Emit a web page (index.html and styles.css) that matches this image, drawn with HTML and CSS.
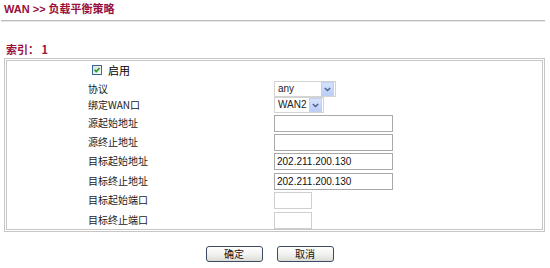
FILE: index.html
```html
<!DOCTYPE html>
<html lang="zh-CN">
<head>
<meta charset="utf-8">
<title>WAN 负载平衡策略</title>
<link rel="stylesheet" href="styles.css">
</head>
<body>
<div class="title">WAN &gt;&gt; 负载平衡策略</div>
<div class="rule"></div>
<div class="index">索引： 1</div>
<div class="box">
  <div class="row r0">
    <div class="enable">
      <span class="check"><svg width="8" height="8" viewBox="0 0 8 8"><path d="M1.6 3.8 L3.3 5.6 L6.6 2" fill="none" stroke="#21a121" stroke-width="1.7"/></svg></span>
      <span>启用</span>
    </div>
  </div>
  <div class="row r1">
    <div class="label">协议</div>
    <div class="select sel-any"><span class="val">any</span><span class="btn"><svg width="7" height="5" viewBox="0 0 7 5"><path d="M0.8 1 L3.5 3.6 L6.2 1" fill="none" stroke="#4d6185" stroke-width="1.4"/></svg></span></div>
  </div>
  <div class="row r2">
    <div class="label">绑定WAN口</div>
    <div class="select sel-wan"><span class="val">WAN2</span><span class="btn"><svg width="7" height="5" viewBox="0 0 7 5"><path d="M0.8 1 L3.5 3.6 L6.2 1" fill="none" stroke="#4d6185" stroke-width="1.4"/></svg></span></div>
  </div>
  <div class="row r3">
    <div class="label">源起始地址</div>
    <div class="input addr"></div>
  </div>
  <div class="row r4">
    <div class="label">源终止地址</div>
    <div class="input addr"></div>
  </div>
  <div class="row r5">
    <div class="label">目标起始地址</div>
    <div class="input addr">202.211.200.130</div>
  </div>
  <div class="row r6">
    <div class="label">目标终止地址</div>
    <div class="input addr">202.211.200.130</div>
  </div>
  <div class="row r7">
    <div class="label">目标起始端口</div>
    <div class="input port"></div>
  </div>
  <div class="row r8">
    <div class="label">目标终止端口</div>
    <div class="input port"></div>
  </div>
</div>
<div class="buttons">
  <button class="button" type="button">确定</button>
  <button class="button" type="button">取消</button>
</div>
</body>
</html>
```
FILE: styles.css
```css
html, body {
  margin: 0;
  padding: 0;
  background: #ffffff;
}
body {
  font-family: "Noto Sans CJK SC", "Liberation Sans", sans-serif;
  font-size: 10px;
  color: #000;
  width: 550px;
}
.title {
  height: 20px;
  line-height: 18px;
  padding-left: 4px;
  font-size: 11px;
  font-weight: bold;
  color: #99103a;
  font-family: "Liberation Sans", "Noto Sans CJK SC", sans-serif;
}
.rule {
  margin: 0 5px 0 1px;
  border-top: 1px solid #bcbcbc;
  border-bottom: 1px solid #e8e8e8;
}
.index {
  margin-top: 20px;
  height: 14px;
  line-height: 14px;
  padding-left: 6px;
  font-size: 11px;
  font-weight: bold;
  color: #99103a;
  font-family: "Noto Sans CJK SC", "Liberation Sans", sans-serif;
}
.box {
  margin: 2px 5px 0 4px;
  border: 3px double #c6c6c6;
  padding-left: 81px;
  display: flex;
  flex-direction: column;
}
.row {
  display: flex;
  align-items: flex-start;
}
.r0 { height: 20px; }
.r1 { height: 16px; }
.r2 { height: 18px; }
.r3 { height: 19px; }
.r4 { height: 19px; }
.r5 { height: 20px; }
.r6 { height: 19px; }
.r7 { height: 20px; }
.r8 { height: 17px; }
.label {
  width: 186px;
  height: 16px;
  line-height: 16px;
  color: #1a1a1a;
}
.enable {
  display: flex;
  align-items: center;
  height: 18px;
  padding-left: 4px;
  gap: 6px;
  font-size: 11px;
}
.check {
  display: flex;
  align-items: center;
  justify-content: center;
  width: 10px;
  height: 10px;
  border: 1px solid #34699d;
  background: linear-gradient(135deg, #dcdcd7, #ffffff);
  box-sizing: border-box;
}
.check svg {
  display: block;
  width: 8px;
  height: 8px;
}
.select {
  display: flex;
  align-items: center;
  height: 16px;
  box-sizing: border-box;
  border: 1px solid #d3d3d3;
  background: #fff;
  font-family: "Liberation Sans", sans-serif;
  font-size: 10px;
  color: #222;
}
.sel-any { width: 62px; }
.sel-wan { width: 50px; }
.select .val {
  flex: 1;
  padding-left: 3px;
  line-height: 14px;
}
.select .btn {
  display: flex;
  align-items: center;
  justify-content: center;
  width: 13px;
  height: 14px;
  margin-right: 1px;
  background: linear-gradient(#d6e3fd, #b9cdf7);
  border: 1px solid #bfd0f3;
  box-sizing: border-box;
}
.input {
  height: 17px;
  box-sizing: border-box;
  border: 1px solid #a9a9a9;
  background: #fff;
  font-family: "Liberation Sans", sans-serif;
  font-size: 10px;
  line-height: 15px;
  padding-left: 2px;
  color: #111;
}
.addr { width: 119px; }
.port {
  width: 38px;
  border-color: #cfcfcf;
}
.buttons {
  display: flex;
  justify-content: center;
  gap: 14px;
  margin-top: 14px;
  padding-right: 11px;
}
.button {
  width: 57px;
  height: 16px;
  padding: 0;
  margin: 0;
  box-sizing: border-box;
  border: 1px solid #3c4a66;
  border-radius: 3px;
  background: linear-gradient(#ffffff 0%, #f2f2f0 50%, #dcdcd6 100%);
  font-family: "Noto Sans CJK SC", sans-serif;
  font-size: 10px;
  line-height: 14px;
  color: #111;
}
```
